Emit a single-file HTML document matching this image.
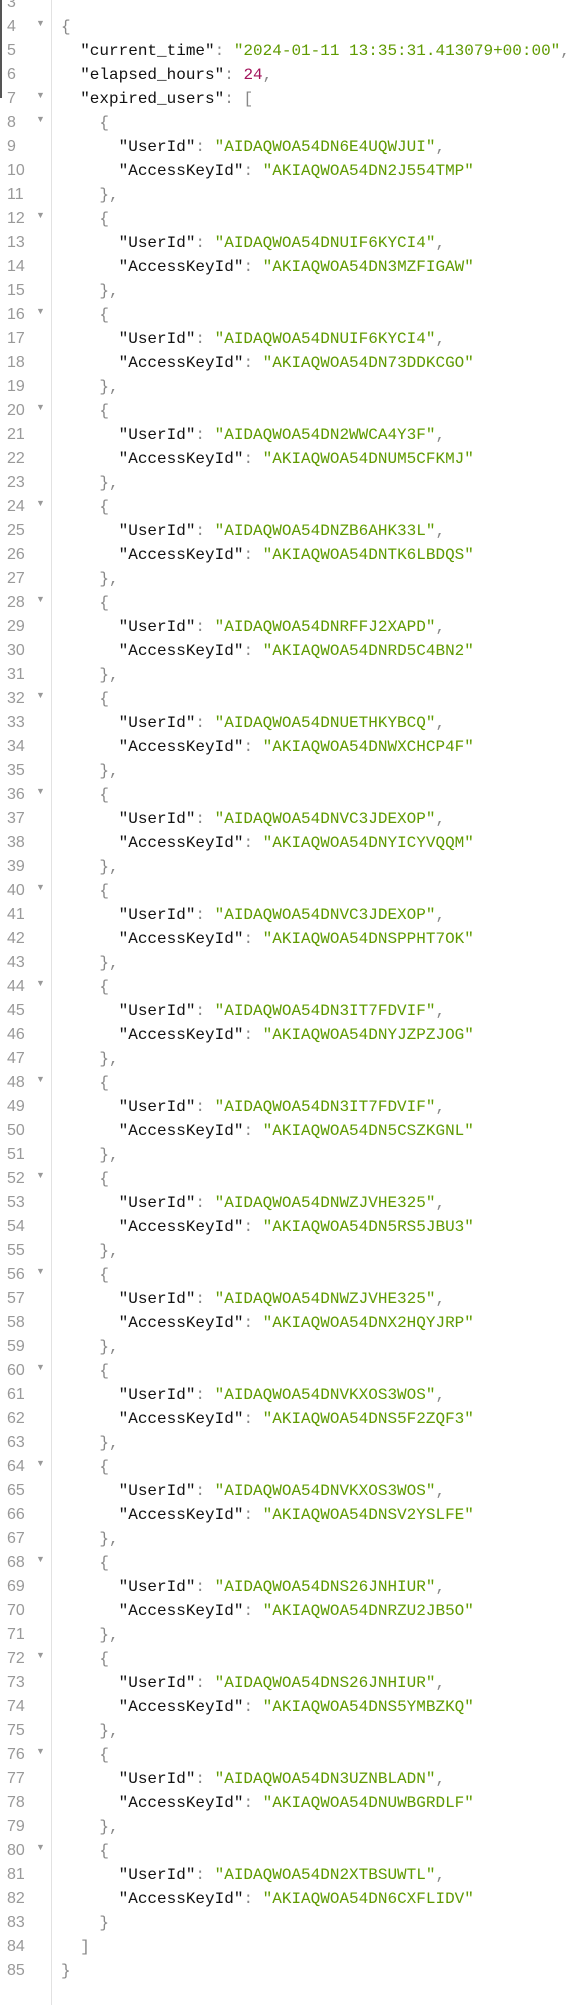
<!DOCTYPE html>
<html><head><meta charset="utf-8"><style>
html,body{margin:0;padding:0;background:#fff;width:571px;height:2005px;overflow:hidden;position:relative}
.g{position:absolute;left:0;top:0;width:51px;height:2005px;border-right:1px solid #e2e2e2;background:#fff}
.bar{position:absolute;left:0;top:0;width:2px;height:98px;background:#555}
.ln{position:absolute;left:0;width:51px;height:24px;line-height:24px;font:16px "Liberation Sans",sans-serif;color:#999}
.ln span.n{position:absolute;left:7px}
.ln span.a{position:absolute;left:36px;font-size:9px;color:#999}
.c{position:absolute;left:61px;height:24px;line-height:24px;font:16px "Liberation Mono",monospace;white-space:pre;color:#111}
.s{color:#5f9a00}.p{color:#888}.num{color:#a3145c}
</style></head><body>
<div class="g"></div><div class="bar"></div>
<div id="root"></div>
<script>
var pairs=[["AIDAQWOA54DN6E4UQWJUI","AKIAQWOA54DN2J554TMP"],["AIDAQWOA54DNUIF6KYCI4","AKIAQWOA54DN3MZFIGAW"],["AIDAQWOA54DNUIF6KYCI4","AKIAQWOA54DN73DDKCGO"],["AIDAQWOA54DN2WWCA4Y3F","AKIAQWOA54DNUM5CFKMJ"],["AIDAQWOA54DNZB6AHK33L","AKIAQWOA54DNTK6LBDQS"],["AIDAQWOA54DNRFFJ2XAPD","AKIAQWOA54DNRD5C4BN2"],["AIDAQWOA54DNUETHKYBCQ","AKIAQWOA54DNWXCHCP4F"],["AIDAQWOA54DNVC3JDEXOP","AKIAQWOA54DNYICYVQQM"],["AIDAQWOA54DNVC3JDEXOP","AKIAQWOA54DNSPPHT7OK"],["AIDAQWOA54DN3IT7FDVIF","AKIAQWOA54DNYJZPZJOG"],["AIDAQWOA54DN3IT7FDVIF","AKIAQWOA54DN5CSZKGNL"],["AIDAQWOA54DNWZJVHE325","AKIAQWOA54DN5RS5JBU3"],["AIDAQWOA54DNWZJVHE325","AKIAQWOA54DNX2HQYJRP"],["AIDAQWOA54DNVKXOS3WOS","AKIAQWOA54DNS5F2ZQF3"],["AIDAQWOA54DNVKXOS3WOS","AKIAQWOA54DNSV2YSLFE"],["AIDAQWOA54DNS26JNHIUR","AKIAQWOA54DNRZU2JB5O"],["AIDAQWOA54DNS26JNHIUR","AKIAQWOA54DNS5YMBZKQ"],["AIDAQWOA54DN3UZNBLADN","AKIAQWOA54DNUWBGRDLF"],["AIDAQWOA54DN2XTBSUWTL","AKIAQWOA54DN6CXFLIDV"]];
var L=[["",0]];
L.push(['<span class="p">{</span>',1]);
L.push(['  "current_time"<span class="p">: </span><span class="s">"2024-01-11 13:35:31.413079+00:00"</span><span class="p">,</span>',0]);
L.push(['  "elapsed_hours"<span class="p">: </span><span class="num">24</span><span class="p">,</span>',0]);
L.push(['  "expired_users"<span class="p">: [</span>',1]);
pairs.forEach(function(p,i){
L.push(['    <span class="p">{</span>',1]);
L.push(['      "UserId"<span class="p">: </span><span class="s">"'+p[0]+'"</span><span class="p">,</span>',0]);
L.push(['      "AccessKeyId"<span class="p">: </span><span class="s">"'+p[1]+'"</span>',0]);
L.push(['    <span class="p">}'+(i<pairs.length-1?',':'')+'</span>',0]);
});
L.push(['  <span class="p">]</span>',0]);
L.push(['<span class="p">}</span>',0]);
var h='';
L.forEach(function(l,i){var top=-6+i*24;var n=i+3;
h+='<div class="ln" style="top:'+top+'px"><span class="n">'+n+'</span>'+(l[1]?'<span class="a">&#9660;</span>':'')+'</div>';
h+='<div class="c" style="top:'+top+'px">'+l[0]+'</div>';});
document.getElementById('root').innerHTML=h;
</script>
</body></html>
